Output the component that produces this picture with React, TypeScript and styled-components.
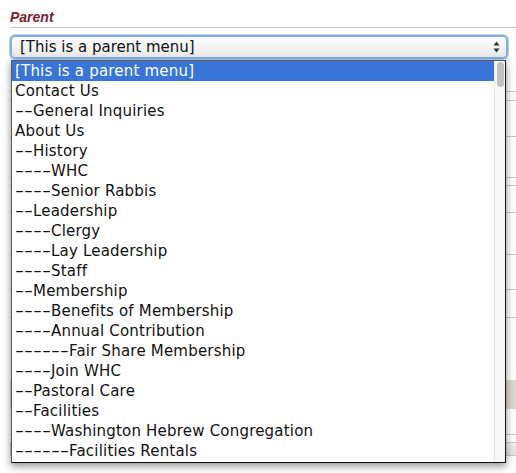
import React from "react";
import styled, { createGlobalStyle } from "styled-components";

const Global = createGlobalStyle`
  html, body { margin: 0; padding: 0; background: #fff; }
  body { font-family: "DejaVu Sans", "Liberation Sans", sans-serif; overflow: hidden; }
`;

const Page = styled.div`
  position: relative;
  width: 516px;
  height: 473px;
  overflow: hidden;
  padding: 0 0 0 10px;
  box-sizing: border-box;
`;

const Label = styled.div`
  font-family: "Liberation Sans", Arial, sans-serif;
  font-weight: bold;
  font-style: italic;
  font-size: 14px;
  color: #7b2232;
  padding-top: 9px;
  height: 17px;
  line-height: 17px;
`;

const Rule = styled.div`
  height: 1px;
  background: #c4c4c4;
  margin-top: 1px;
`;

const SelectBox = styled.div`
  margin-top: 7px;
  width: 498px;
  height: 24px;
  box-sizing: border-box;
  border-radius: 5px;
  border: 2px solid #86afe0;
  box-shadow: 0 0 0 1px #b9d1ee;
  background: linear-gradient(#fdfdfd, #e9e9e9);
  display: flex;
  align-items: center;
  justify-content: space-between;
  padding: 0 6px 0 8px;
  font-size: 15px;
  color: #111;
`;

const Arrows = styled.svg`
  width: 7px;
  height: 12px;
`;

const Behind = styled.div`
  margin-top: 1px;
  display: flex;
  flex-direction: column;
`;

const Row = styled.div<{ $h: number; $bg?: string; $line?: boolean }>`
  height: ${(p) => p.$h}px;
  background: ${(p) => p.$bg || "transparent"};
  border-bottom: ${(p) => (p.$line ? "1px solid #c9c9c9" : "none")};
  box-sizing: border-box;
`;

const Toolbar = styled.div`
  height: 12px;
  border-left: 1px solid #c9c9c9;
  border-bottom: 1px solid #c9c9c9;
  background: linear-gradient(#efefef, #e2e2e2);
  display: flex;
  align-items: center;
  gap: 8px;
  padding-left: 54px;
`;

const ToolIcon = styled.span<{ $w: number }>`
  width: ${(p) => p.$w}px;
  height: 8px;
  background: #33508a;
  opacity: 0.7;
`;

const ToolField = styled.span`
  margin-left: 30px;
  width: 75px;
  height: 10px;
  border: 1px solid #b5b5b5;
  background: #f4f4f4;
`;

const Dropdown = styled.div`
  position: absolute;
  left: 11px;
  top: 60px;
  width: 495px;
  height: 403px;
  box-sizing: border-box;
  background: #fff;
  border: 1px solid #5a5a5a;
  border-right-color: #111;
  border-bottom-color: #111;
  box-shadow: 0 3px 8px rgba(0, 0, 0, 0.45);
  display: flex;
  overflow: hidden;
`;

const List = styled.div`
  flex: 1;
  display: flex;
  flex-direction: column;
`;

const Item = styled.div<{ $sel?: boolean }>`
  height: 20px;
  line-height: 20px;
  padding-left: 3px;
  font-size: 15px;
  white-space: nowrap;
  color: ${(p) => (p.$sel ? "#fff" : "#111")};
  background: ${(p) => (p.$sel ? "#3875d7" : "transparent")};
  display: flex;
`;

const Dashes = styled.span<{ $n: number }>`
  display: inline-block;
  width: ${(p) => p.$n * 9}px;
  overflow: visible;
`;

const DashText = styled.span`
  display: inline-block;
  transform: scaleX(1.66);
  transform-origin: left center;
`;

const Words = styled.span`
  letter-spacing: 0.2px;
`;

const Scrollbar = styled.div`
  width: 11px;
  background: #f7f7f7;
  border-left: 1px solid #e6e6e6;
  padding: 1px 0 0 2px;
  box-sizing: border-box;
`;

const Thumb = styled.div`
  width: 7px;
  height: 25px;
  border-radius: 4px;
  background: #c2c2c2;
`;

const items = [
  "[This is a parent menu]",
  "Contact Us",
  "--General Inquiries",
  "About Us",
  "--History",
  "----WHC",
  "----Senior Rabbis",
  "--Leadership",
  "----Clergy",
  "----Lay Leadership",
  "----Staff",
  "--Membership",
  "----Benefits of Membership",
  "----Annual Contribution",
  "------Fair Share Membership",
  "----Join WHC",
  "--Pastoral Care",
  "--Facilities",
  "----Washington Hebrew Congregation",
  "------Facilities Rentals",
];

const rows: { h: number; bg?: string; line?: boolean }[] = [
  { h: 32, line: true },
  { h: 9, line: true },
  { h: 36, line: true },
  { h: 41, line: true },
  { h: 8, line: true },
  { h: 27, line: true },
  { h: 42, line: true },
  { h: 35, line: true },
  { h: 28, line: true },
  { h: 62 },
  { h: 29, bg: "#ddd8cc" },
  { h: 26, line: true },
  { h: 8, line: true },
];

function Option({ text, sel }: { text: string; sel?: boolean }) {
  const m = text.match(/^(-*)(.*)$/) as RegExpMatchArray;
  const dashes = m[1];
  const rest = m[2];
  return (
    <Item $sel={sel}>
      {dashes && (
        <Dashes $n={dashes.length}>
          <DashText>{dashes}</DashText>
        </Dashes>
      )}
      <Words>{rest}</Words>
    </Item>
  );
}

export default function App() {
  return (
    <>
      <Global />
      <Page>
        <Label>Parent</Label>
        <Rule />
        <SelectBox>
          <span>[This is a parent menu]</span>
          <Arrows viewBox="0 0 7 12">
            <path d="M3.5 0.5 L6.5 4.5 L0.5 4.5 Z" fill="#333" />
            <path d="M3.5 11.5 L6.5 7.5 L0.5 7.5 Z" fill="#333" />
          </Arrows>
        </SelectBox>
        <Behind>
          {rows.map((r, i) => (
            <Row key={i} $h={r.h} $bg={r.bg} $line={r.line} />
          ))}
          <Toolbar>
            <ToolIcon $w={10} />
            <ToolIcon $w={10} />
            <ToolIcon $w={10} />
            <ToolIcon $w={10} />
            <ToolField />
          </Toolbar>
        </Behind>
        <Dropdown>
          <List>
            {items.map((t, i) => (
              <Option key={i} text={t} sel={i === 0} />
            ))}
          </List>
          <Scrollbar>
            <Thumb />
          </Scrollbar>
        </Dropdown>
      </Page>
    </>
  );
}
